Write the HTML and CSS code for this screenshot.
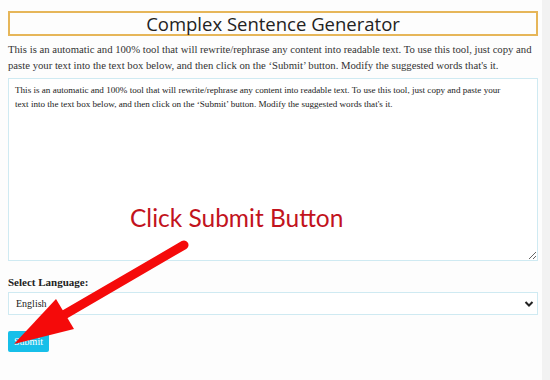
FILE: index.html
```html
<!DOCTYPE html>
<html lang="en">
<head>
    <meta charset="UTF-8">
    <meta name="viewport" content="width=device-width, initial-scale=1.0">
    <title>Complex Sentence Generator</title>
    <link rel="stylesheet" href="styles.css">
</head>
<body>
    <div class="page">
        <h1 class="tool-title">Complex Sentence Generator</h1>
        <p class="intro">This is an automatic and 100% tool that will rewrite/rephrase any content into readable text. To use this tool, just copy and paste your text into the text box below, and then click on the ‘Submit’ button. Modify the suggested words that's it.</p>

        <textarea class="input-text">This is an automatic and 100% tool that will rewrite/rephrase any content into readable text. To use this tool, just copy and paste your text into the text box below, and then click on the ‘Submit’ button. Modify the suggested words that's it.</textarea>

        <label class="field-label" for="lang">Select Language:</label>
        <div class="select-wrap">
            <select id="lang" class="lang-select">
                <option>English</option>
            </select>
            <svg class="chevron" width="10" height="8" viewBox="0 0 10 8">
                <path d="M1.5 2 L5 5.5 L8.5 2" fill="none" stroke="#222" stroke-width="2"/>
            </svg>
        </div>

        <button class="submit-btn">Submit</button>

        <!-- annotation drawn over the form -->
        <div class="hint-text">Click Submit Button</div>
        <svg class="hint-arrow" width="550" height="380" viewBox="0 0 550 380">
            <line x1="184" y1="245" x2="62" y2="316" stroke="#f50a0a" stroke-width="9" stroke-linecap="round"/>
            <polygon points="14,344 56,299 74,329" fill="#f50a0a"/>
        </svg>
    </div>
</body>
</html>
```

FILE: styles.css
```css
* {
    margin: 0;
    padding: 0;
    box-sizing: border-box;
}
html {
    background: #f2f2f2;
}
body {
    width: 542px;
    min-height: 380px;
    background: #fdfdfd;
    font-family: "Liberation Serif", "Times New Roman", serif;
    color: #222;
}
.page {
    position: relative;
    padding: 11px 4px 20px 8px;
    display: flex;
    flex-direction: column;
}
.tool-title {
    border: 2px solid #e6b659;
    height: 25px;
    font-family: "Open Sans", sans-serif;
    font-weight: 400;
    font-size: 18.5px;
    line-height: 21px;
    text-align: center;
    color: #222;
}
.intro {
    margin-top: 5px;
    font-size: 10.7px;
    line-height: 16px;
    color: #333;
}
.input-text {
    margin-top: 5px;
    height: 183px;
    border: 1px solid #cfeaf2;
    background: #fff;
    padding: 4px 32px 4px 6px;
    font-family: "Liberation Serif", "Times New Roman", serif;
    font-size: 9.1px;
    line-height: 14px;
    color: #222;
    resize: vertical;
}
.field-label {
    margin-top: 14px;
    font-weight: bold;
    font-size: 11px;
    line-height: 14px;
    color: #222;
}
.select-wrap {
    position: relative;
    margin-top: 3px;
}
.lang-select {
    width: 100%;
    height: 23px;
    border: 1px solid #cfeaf2;
    background: #fff;
    padding: 0 7px;
    font-family: "Liberation Serif", "Times New Roman", serif;
    font-size: 10px;
    color: #222;
    appearance: none;
    -webkit-appearance: none;
}
.chevron {
    position: absolute;
    right: 4px;
    top: 8px;
    pointer-events: none;
}
.submit-btn {
    align-self: flex-start;
    margin-top: 16px;
    width: 41px;
    height: 21px;
    border: none;
    border-radius: 2px;
    background: #17bfe9;
    color: #fff;
    font-family: "Liberation Serif", "Times New Roman", serif;
    font-size: 10px;
}
.hint-text {
    position: absolute;
    left: 130px;
    top: 203px;
    font-family: "Lato", sans-serif;
    font-size: 24.5px;
    color: #c2131d;
}
.hint-arrow {
    position: absolute;
    left: 0;
    top: 0;
    pointer-events: none;
}
```
